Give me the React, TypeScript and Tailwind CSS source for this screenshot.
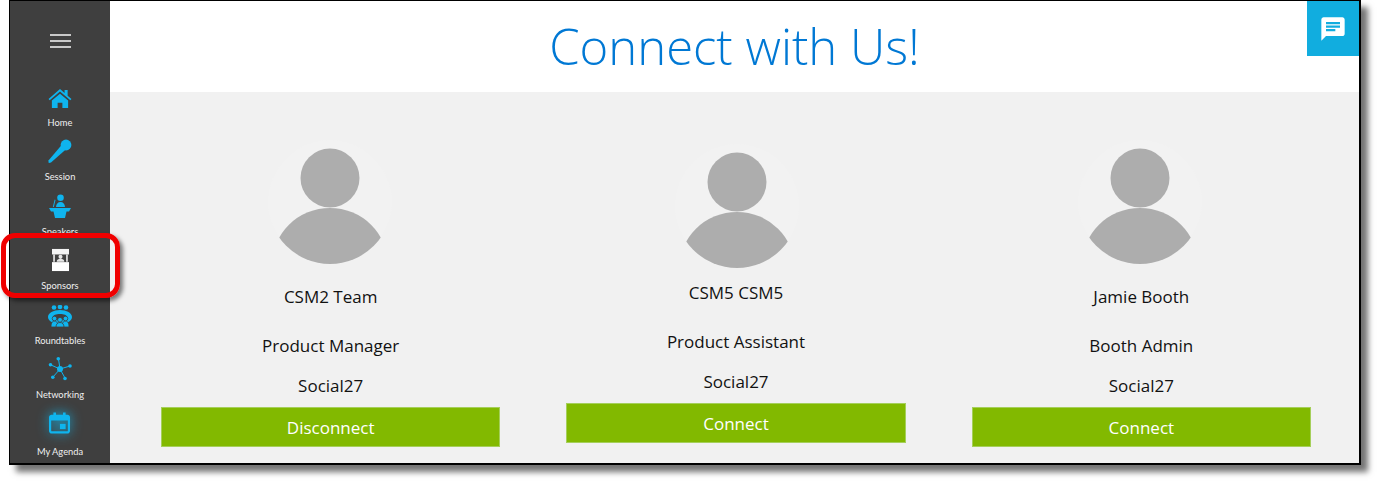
const people = [
  { name: "CSM2 Team", title: "Product Manager", action: "Disconnect", lift: "", avatar: "-ml-[2px]", nameGap: "mt-[21px]" },
  { name: "CSM5 CSM5", title: "Product Assistant", action: "Connect", lift: "-mt-1", avatar: "mt-[8px] ml-[2px]", nameGap: "mt-[13px]" },
  { name: "Jamie Booth", title: "Booth Admin", action: "Connect", lift: "", avatar: "-ml-[2px]", nameGap: "mt-[21px]" },
];

function HomeIcon() {
  return (
    <svg viewBox="0 0 24 22" className="h-[21px] w-[24px] fill-[#0fb4ee]">
      <path d="M12 1 0 11.500l1.200 1.300L12 3.600l10.800 9.200 1.200-1.300-4-3.500V2h-3.200v3.200z" />
      <path d="M3.500 13.200 12 6l8.500 7.200V21h-6v-5.500h-5V21h-6z" />
    </svg>
  );
}

function MicIcon() {
  return (
    <svg viewBox="0 0 24 24" className="h-[24px] w-[24px] fill-[#0fb4ee]">
      <circle cx="18" cy="6" r="5.400" />
      <path d="M13 6.800 17.200 11 3 23.600 1 24l-.6-.8.3-2z" />
    </svg>
  );
}

function SpeakerIcon() {
  return (
    <svg viewBox="0 0 24 24" className="h-[24px] w-[24px] fill-[#0fb4ee]">
      <circle cx="12.500" cy="3.800" r="3.300" />
      <path d="M8 13c0-3 2-5 4.500-5s4.500 2 4.500 5z" />
      <path d="M1 14h22l-2 3.500h-2.500L17 24H7l-1.500-6.500H3z" />
      <path d="M7.500 6 5.800 13h-1L6.700 5.500z" />
    </svg>
  );
}

function BoothIcon() {
  return (
    <svg viewBox="0 0 20 26" className="h-[24px] w-[17px]">
      <path fill="#f4f4f4" d="M0 0h20v6.500H0z" />
      <path fill="#f4f4f4" d="M1.500 6.500h1.800V15H1.500zM16.700 6.500h1.800V15h-1.800z" />
      <circle fill="#e6e6e6" cx="10" cy="9.300" r="2.400" />
      <path fill="#e6e6e6" d="M5.500 15c0-2.500 2-3.400 4.500-3.400s4.500.9 4.500 3.400z" />
      <path fill="#fff" d="M0 15.500h20V26H0z" />
    </svg>
  );
}

function TablesIcon() {
  return (
    <svg viewBox="0 0 24 22" className="h-[22px] w-[24px] fill-[#0fb4ee]">
      <circle cx="6" cy="2.500" r="2.300" />
      <circle cx="12" cy="2" r="2.300" />
      <circle cx="18" cy="2.500" r="2.300" />
      <path fillRule="evenodd" d="M12 5c6.600 0 12 3 12 7s-5.400 7-12 7S0 16 0 12s5.400-7 12-7zm0 4c-3.900 0-7 1.300-7 3s3.100 3 7 3 7-1.300 7-3-3.100-3-7-3z" />
      <path stroke="#3f3f3f" strokeWidth="0.800" d="M3 22c0-4 1.300-6 3.500-6s3.500 2 3.500 6zM14 22c0-4 1.300-6 3.500-6s3.500 2 3.500 6z" />
      <circle cx="6.500" cy="13.500" r="2.300" stroke="#3f3f3f" strokeWidth="0.800" />
      <circle cx="17.500" cy="13.500" r="2.300" stroke="#3f3f3f" strokeWidth="0.800" />
      <path stroke="#3f3f3f" strokeWidth="0.800" d="M8 22c0-3 1.700-4.500 4-4.500s4 1.500 4 4.500z" />
      <circle cx="12" cy="14.800" r="2.400" stroke="#3f3f3f" strokeWidth="0.800" />
    </svg>
  );
}

function NetworkIcon() {
  return (
    <svg viewBox="0 0 24 24" className="h-[24px] w-[24px] fill-[#0fb4ee] stroke-[#0fb4ee]">
      <path strokeWidth="1" fill="none" d="M12 12 3 8M12 12 10.500 2M12 12l10-3M12 12l-7 8M12 12l5 9" />
      <circle cx="12" cy="12" r="3" stroke="none" />
      <circle cx="2.500" cy="7.800" r="1.800" stroke="none" />
      <circle cx="10.300" cy="1.800" r="1.800" stroke="none" />
      <circle cx="22" cy="9" r="1.800" stroke="none" />
      <circle cx="4.800" cy="20.200" r="1.800" stroke="none" />
      <circle cx="17" cy="21.500" r="1.800" stroke="none" />
    </svg>
  );
}

function AgendaIcon() {
  return (
    <svg viewBox="0 0 24 24" className="h-[22px] w-[21px] fill-[#0fb4ee] drop-shadow-[0_0_6px_#12b5ea]">
      <path d="M5 0h3v2.500h8V0h3v2.500h2c1.600 0 3 1.400 3 3V21c0 1.600-1.400 3-3 3H3c-1.600 0-3-1.400-3-3V5.500c0-1.600 1.400-3 3-3h2zM2.500 9v11.500c0 .6.400 1 1 1h17c.6 0 1-.4 1-1V9z" />
      <path d="M12.500 13H19v6h-6.500z" />
    </svg>
  );
}

const navItems = [
  { label: "Home", icon: <HomeIcon /> },
  { label: "Session", icon: <MicIcon /> },
  { label: "Speakers", icon: <SpeakerIcon /> },
  { label: "Sponsors", icon: <BoothIcon /> },
  { label: "Roundtables", icon: <TablesIcon /> },
  { label: "Networking", icon: <NetworkIcon /> },
];

function Avatar({ className }: { className: string }) {
  return (
    <div className={`h-[124px] w-[124px] overflow-hidden rounded-full bg-[#f2f2f2] ${className}`}>
      <svg viewBox="0 0 124 124" className="h-full w-full fill-[#adadad]">
        <circle cx="62" cy="38" r="29.500" />
        <ellipse cx="62" cy="125" rx="58" ry="57" />
      </svg>
    </div>
  );
}

export default function App() {
  return (
    <div className="relative h-[483px] w-[1379px] overflow-hidden bg-white pl-[9px] font-['Open_Sans',sans-serif]">
      <div className="flex h-[465px] w-[1352px] border-t border-r-2 border-b-2 border-l border-black bg-white shadow-[7px_7px_6px_rgba(0,0,0,0.55)]">
        <aside className="flex h-full w-[100px] shrink-0 flex-col items-center bg-[#3f3f3f] font-['Lato',sans-serif] text-[9.300px] text-[#f0f0f0]">
          <div className="mt-[33px] mb-[34px] flex w-[21px] flex-col gap-[4px]">
            <span className="h-[2px] bg-[#c8c8c8]" />
            <span className="h-[2px] bg-[#c8c8c8]" />
            <span className="h-[2px] bg-[#c8c8c8]" />
          </div>
          {navItems.map((item) => (
            <div key={item.label} className="flex h-[54.400px] w-full flex-col items-center">
              <div className="flex h-[27px] items-end">{item.icon}</div>
              <span className="mt-[8px] leading-[12px]">{item.label}</span>
            </div>
          ))}
          <div className="mt-[4px] flex flex-col items-center">
            <AgendaIcon />
            <span className="mt-[12px] leading-[12px]">My Agenda</span>
          </div>
        </aside>

        <main className="flex min-w-0 flex-1 flex-col">
          <header className="relative h-[91px] bg-white pt-[8px] text-center text-[49px] leading-[74px] font-light text-[#0078d4]">
            Connect with Us!
            <button className="absolute top-0 right-0 flex h-[55px] w-[52px] items-center justify-center bg-[#11addf]">
              <svg viewBox="0 0 24 24" className="h-[28px] w-[28px] fill-white">
                <path d="M20 2H4c-1.100 0-1.990.9-1.990 2L2 22l4-4h14c1.100 0 2-.9 2-2V4c0-1.100-.9-2-2-2zM6 9h12v2H6V9zm8 5H6v-2h8v2zm4-6H6V6h12v2z" />
              </svg>
            </button>
          </header>
          <section className="grid flex-1 grid-cols-3 gap-x-[66px] bg-[#f1f1f1] pt-[48px] pr-[48px] pl-[51px] text-[17px] text-[#111]">
            {people.map((person) => (
              <article key={person.name} className={`flex flex-col items-center ${person.lift}`}>
                <Avatar className={person.avatar} />
                <p className={`${person.nameGap} leading-[24px]`}>{person.name}</p>
                <p className="mt-[25px] leading-[24px]">{person.title}</p>
                <p className="mt-[16px] leading-[24px]">Social27</p>
                <button className="mt-[9px] h-[40px] w-full border border-[#a5cf5a] bg-[#82b900] pt-[2px] text-[17px] text-white">
                  {person.action}
                </button>
              </article>
            ))}
          </section>
        </main>
      </div>
      <div className="absolute top-[233px] left-[1px] h-[65px] w-[119px] rounded-[14px] border-[5px] border-[#f00000] shadow-[3px_3px_4px_rgba(0,0,0,0.5)]" />
    </div>
  );
}
